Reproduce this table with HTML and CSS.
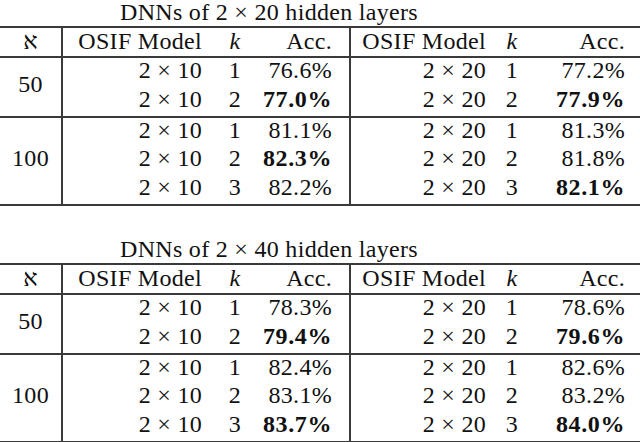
FILE: index.html
```html
<!DOCTYPE html>
<html lang="en">
<head>
  <meta charset="UTF-8" />
  <title>OSIF results</title>
  <link rel="stylesheet" href="styles.css">
</head>
<body>
  <!-- first block: 2 x 20 hidden layers -->
  <div class="block">
    <div class="caption">DNNs of 2 &times; 20 hidden layers</div>
    <table class="results">
      <colgroup>
        <col class="c-aleph"><col class="c-model"><col class="c-k"><col class="c-acc">
        <col class="c-model2"><col class="c-k2"><col class="c-acc2">
      </colgroup>
      <thead>
        <tr>
          <th class="aleph">&#x05D0;</th>
          <th class="model">OSIF Model</th>
          <th class="k"><i>k</i></th>
          <th class="acc sep">Acc.</th>
          <th class="model2">OSIF Model</th>
          <th class="k"><i>k</i></th>
          <th class="acc2">Acc.</th>
        </tr>
      </thead>
      <tbody>
        <tr>
          <td class="aleph" rowspan="2">50</td>
          <td class="model">2 &times; 10</td><td class="k">1</td><td class="acc sep">76.6%</td>
          <td class="model2">2 &times; 20</td><td class="k">1</td><td class="acc2">77.2%</td>
        </tr>
        <tr>
          <td class="model">2 &times; 10</td><td class="k">2</td><td class="acc sep"><b>77.0%</b></td>
          <td class="model2">2 &times; 20</td><td class="k">2</td><td class="acc2"><b>77.9%</b></td>
        </tr>
      </tbody>
      <tbody>
        <tr>
          <td class="aleph" rowspan="3">100</td>
          <td class="model">2 &times; 10</td><td class="k">1</td><td class="acc sep">81.1%</td>
          <td class="model2">2 &times; 20</td><td class="k">1</td><td class="acc2">81.3%</td>
        </tr>
        <tr>
          <td class="model">2 &times; 10</td><td class="k">2</td><td class="acc sep"><b>82.3%</b></td>
          <td class="model2">2 &times; 20</td><td class="k">2</td><td class="acc2">81.8%</td>
        </tr>
        <tr>
          <td class="model">2 &times; 10</td><td class="k">3</td><td class="acc sep">82.2%</td>
          <td class="model2">2 &times; 20</td><td class="k">3</td><td class="acc2"><b>82.1%</b></td>
        </tr>
      </tbody>
    </table>
  </div>

  <!-- second block: 2 x 40 hidden layers -->
  <div class="block second">
    <div class="caption">DNNs of 2 &times; 40 hidden layers</div>
    <table class="results">
      <colgroup>
        <col class="c-aleph"><col class="c-model"><col class="c-k"><col class="c-acc">
        <col class="c-model2"><col class="c-k2"><col class="c-acc2">
      </colgroup>
      <thead>
        <tr>
          <th class="aleph">&#x05D0;</th>
          <th class="model">OSIF Model</th>
          <th class="k"><i>k</i></th>
          <th class="acc sep">Acc.</th>
          <th class="model2">OSIF Model</th>
          <th class="k"><i>k</i></th>
          <th class="acc2">Acc.</th>
        </tr>
      </thead>
      <tbody>
        <tr>
          <td class="aleph" rowspan="2">50</td>
          <td class="model">2 &times; 10</td><td class="k">1</td><td class="acc sep">78.3%</td>
          <td class="model2">2 &times; 20</td><td class="k">1</td><td class="acc2">78.6%</td>
        </tr>
        <tr>
          <td class="model">2 &times; 10</td><td class="k">2</td><td class="acc sep"><b>79.4%</b></td>
          <td class="model2">2 &times; 20</td><td class="k">2</td><td class="acc2"><b>79.6%</b></td>
        </tr>
      </tbody>
      <tbody>
        <tr>
          <td class="aleph" rowspan="3">100</td>
          <td class="model">2 &times; 10</td><td class="k">1</td><td class="acc sep">82.4%</td>
          <td class="model2">2 &times; 20</td><td class="k">1</td><td class="acc2">82.6%</td>
        </tr>
        <tr>
          <td class="model">2 &times; 10</td><td class="k">2</td><td class="acc sep">83.1%</td>
          <td class="model2">2 &times; 20</td><td class="k">2</td><td class="acc2">83.2%</td>
        </tr>
        <tr>
          <td class="model">2 &times; 10</td><td class="k">3</td><td class="acc sep"><b>83.7%</b></td>
          <td class="model2">2 &times; 20</td><td class="k">3</td><td class="acc2"><b>84.0%</b></td>
        </tr>
      </tbody>
    </table>
  </div>
</body>
</html>
```

FILE: styles.css
```css
body {
  margin: 0;
  background-color: #fff;
  color: #111;
  font-family: "Liberation Serif", "DejaVu Serif", serif;
  font-size: 24px;
}

.block {
  width: 640px;
}

.second {
  margin-top: 31px;
}

/* caption sits slightly left of centre, like the latex multicolumn */
.caption {
  height: 26px;
  line-height: 24px;
  padding-left: 120px;
  letter-spacing: 0.3px;
}

.results {
  width: 640px;
  border-collapse: collapse;
  table-layout: fixed;
  border-top: 2px solid #3a3a3a;
  border-bottom: 2px solid #3a3a3a;
  font-family: "Liberation Serif", "DejaVu Serif", serif;
  font-size: 24px;
}

.results col.c-aleph  { width: 62px; }
.results col.c-model  { width: 152px; }
.results col.c-k      { width: 42px; }
.results col.c-acc    { width: 94px; }
.results col.c-model2 { width: 148px; }
.results col.c-k2     { width: 28px; }
.results col.c-acc2   { width: 114px; }

.results th,
.results td {
  font-family: "Liberation Serif", "DejaVu Serif", serif;
  font-weight: normal;
  padding: 0 0 3px 0;
  height: 25.8px;
  line-height: 25.8px;
  white-space: nowrap;
  letter-spacing: 0.3px;
}

.results thead th {
  height: 26px;
  line-height: 26px;
  padding-bottom: 2px;
  border-bottom: 2px solid #3a3a3a;
}

.results tbody + tbody {
  border-top: 2px solid #3a3a3a;
}

.results .aleph {
  text-align: center;
  border-right: 2px solid #3a3a3a;
}

.results .model  { text-align: right; padding-right: 12px; }
.results .k      { text-align: center; }
.results .acc    { text-align: right; padding-right: 17px; }
.results .model2 { text-align: right; padding-right: 12px; }
.results .acc2   { text-align: right; padding-right: 15px; }

.results .sep {
  border-right: 2px solid #3a3a3a;
}

.results b {
  font-weight: bold;
  letter-spacing: 0.6px;
}
```
